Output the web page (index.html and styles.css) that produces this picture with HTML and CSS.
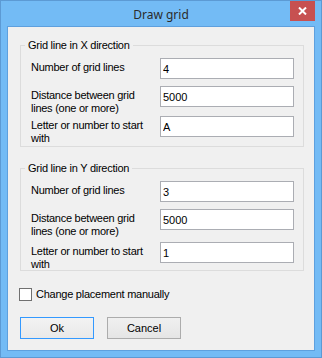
FILE: index.html
```html
<!DOCTYPE html>
<html lang="en">
<head>
  <meta charset="UTF-8">
  <title>Draw grid</title>
  <link rel="stylesheet" href="styles.css">
</head>
<body>
  <div class="window">
    <div class="titlebar">
      <span class="title">Draw grid</span>
      <button class="close" aria-label="Close">
        <svg width="9" height="8" viewBox="0 0 9 8"><path d="M1 0.5 L8 7.5 M8 0.5 L1 7.5" stroke="#fff" stroke-width="2"/></svg>
      </button>
    </div>

    <div class="client">
      <fieldset class="group">
        <legend>Grid line in X direction</legend>
        <div class="row"><label>Number of grid lines</label><input class="field" value="4"></div>
        <div class="row two"><label>Distance between grid lines (one or more)</label><input class="field" value="5000"></div>
        <div class="row two"><label>Letter or number to start with</label><input class="field" value="A"></div>
      </fieldset>

      <fieldset class="group second">
        <legend>Grid line in Y direction</legend>
        <div class="row"><label>Number of grid lines</label><input class="field" value="3"></div>
        <div class="row spaced"><label>Distance between grid lines (one or more)</label><input class="field" value="5000"></div>
        <div class="row"><label>Letter or number to start with</label><input class="field" value="1"></div>
      </fieldset>

      <label class="check"><span class="box"></span>Change placement manually</label>

      <div class="buttons">
        <button class="btn default">Ok</button>
        <button class="btn">Cancel</button>
      </div>
    </div>
  </div>
</body>
</html>
```

FILE: styles.css
```css
* { margin: 0; padding: 0; box-sizing: border-box; }
body { font-family: "Liberation Sans", Arial, sans-serif; font-size: 11px; color: #000; }

.window {
  position: relative; width: 322px; height: 358px;
  background: #73bbf5; border: 1px solid #5c9ad4;
  padding: 0 6px 6px 6px;
}
.titlebar { height: 25px; display: flex; justify-content: center; align-items: center; }
.title { font-family: "Noto Sans", sans-serif; font-size: 12px; color: #2b2b2b; padding-top: 1px; }
.close {
  position: absolute; top: 0; right: 6px; width: 25px; height: 20px;
  border: none; background: #c75050;
  display: flex; justify-content: center; align-items: center;
}

.client {
  height: 325px; background: #f0f0f0; border: 1px solid #5ea0de;
  padding: 0 10px 0 12px;
}

.group {
  margin-top: 12px; border: 1px solid #dcdcdc;
  padding: 6px 9px 0 4px;
}
.group.second { margin-top: 15px; }
.group legend { padding: 0 3px; line-height: 13px; letter-spacing: -0.25px; }

.row {
  display: grid; grid-template-columns: 129px 134px;
  align-items: start; height: 28px; padding-left: 6px;
}
.row.two { height: 30px; }
.row.spaced { height: 33px; }
.row label { line-height: 13px; padding: 3px 8px 0 0; letter-spacing: -0.25px; }

.field {
  height: 21px; width: 134px; border: 1px solid #abadb3; background: #fff;
  padding: 0 2px; font: 11px "Liberation Sans", Arial, sans-serif; color: #000; outline: none;
}

.check {
  display: flex; align-items: flex-start; margin: 17px 0 0 -1px;
  line-height: 13px; letter-spacing: -0.25px;
}
.check .box { width: 13px; height: 13px; border: 1px solid #707070; background: #fff; margin-right: 4px; }

.buttons { display: flex; gap: 13px; margin-top: 16px; }
.btn {
  width: 74px; height: 22px; border: 1px solid #acacac;
  background: linear-gradient(#f0f0f0, #e5e5e5);
  font: 11px "Liberation Sans", Arial, sans-serif; color: #000;
}
.btn.default { border-color: #3399ff; background: linear-gradient(#f3f3f3, #e9e9e9); }
```
